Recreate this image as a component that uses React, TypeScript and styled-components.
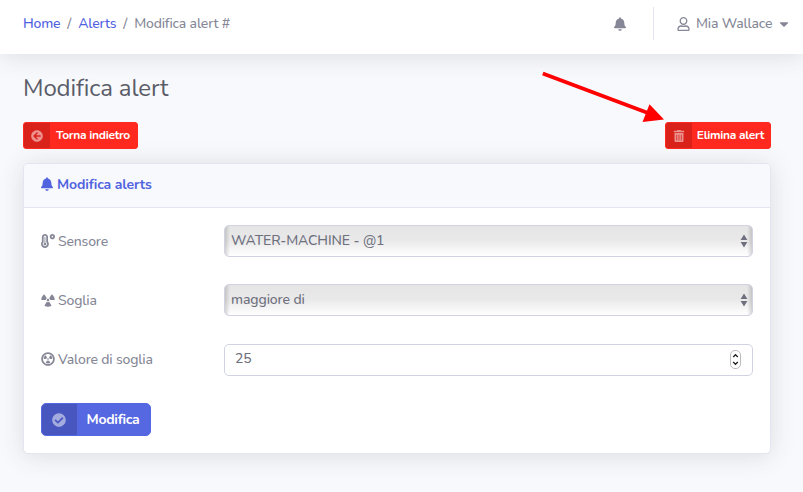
import React from 'react';
import styled, { createGlobalStyle } from 'styled-components';
import {
  FaArrowCircleLeft,
  FaBell,
  FaCaretDown,
  FaCheckCircle,
  FaRadiation,
  FaRadiationAlt,
  FaRegUser,
  FaTemperatureHigh,
  FaTrashAlt,
} from 'react-icons/fa';

const GlobalStyle = createGlobalStyle`
  *, *::before, *::after { box-sizing: border-box; }
  body {
    margin: 0;
    background: #f8f9fc;
    color: #858796;
    font: 500 14px/21px Nunito, Lato, sans-serif;
    letter-spacing: -0.18px;
  }
`;

const Page = styled.div`
  min-height: 492px;
  overflow: hidden;
`;

const Topbar = styled.header`
  display: flex;
  align-items: center;
  height: 54px;
  padding: 0 14px 7px 23px;
  background: #fff;
  box-shadow: 0 2px 25px rgba(58, 59, 69, 0.15);
`;

const Breadcrumb = styled.nav`
  display: flex;
  gap: 7px;
  margin-right: auto;
`;

const Crumb = styled.a`
  color: #4e5fdf;
  text-decoration: none;
`;

const AlertsBell = styled(FaBell)`
  width: 12px;
  height: 14px;
`;

const Divider = styled.div`
  width: 1px;
  height: 33px;
  margin: 0 23px 0 27px;
  background: #e3e6f0;
`;

const UserMenu = styled.div`
  display: flex;
  align-items: center;
  white-space: nowrap;
`;

const UserName = styled.span`
  width: 77px;
  margin: 0 6px;
`;

const UserIcon = styled(FaRegUser)`
  width: 13px;
  height: 14px;
`;

const Caret = styled(FaCaretDown)`
  width: 10px;
  height: 14px;
`;

const Main = styled.main`
  padding: 19px 32px 0 23px;
`;

const Title = styled.h1`
  margin: 0 0 19px;
  color: #5a5c69;
  font-size: 24px;
  font-weight: 400;
  line-height: 30px;
  letter-spacing: -0.12px;
`;

const Actions = styled.div`
  display: flex;
  justify-content: space-between;
  margin-bottom: 14px;
`;

const SplitButton = styled.button<{ $large?: boolean }>`
  display: flex;
  align-items: stretch;
  justify-self: start;
  height: ${p => (p.$large ? 33 : 27)}px;
  padding: 0;
  border: 1px solid ${p => (p.$large ? '#5567e1' : '#ff291f')};
  border-radius: ${p => (p.$large ? 5 : 3)}px;
  background: ${p => (p.$large ? '#5567e1' : '#ff291f')};
  color: #fff;
  font: inherit;
  font-size: ${p => (p.$large ? 14 : 12)}px;
  font-weight: 680;
  overflow: hidden;
`;

const ButtonIcon = styled.span<{ $large?: boolean }>`
  display: flex;
  align-items: center;
  justify-content: center;
  width: ${p => (p.$large ? 35 : 26)}px;
  padding-right: 1px;
  background: rgba(0, 0, 0, 0.15);
  color: rgba(255, 255, 255, 0.5);
  font-size: ${p => (p.$large ? 14 : 12)}px;
`;

const ButtonLabel = styled.span<{ $width: number }>`
  display: flex;
  align-items: center;
  justify-content: center;
  width: ${p => p.$width}px;
  padding-right: 1px;
  white-space: nowrap;
  letter-spacing: -0.28px;
`;

const Card = styled.section`
  height: 291px;
  border: 1px solid #e3e6f0;
  border-radius: 5px;
  background: #fff;
  box-shadow: 0 2px 25px rgba(58, 59, 69, 0.15);
`;

const CardHeader = styled.h2`
  display: flex;
  align-items: center;
  gap: 4px;
  height: 44px;
  margin: 0;
  padding: 0 17px 2px;
  border-bottom: 1px solid #e3e6f0;
  border-radius: 4px 4px 0 0;
  background: #f8f9fc;
  color: #5163df;
  font-size: 14px;
  font-weight: 700;
  letter-spacing: -0.12px;
`;

const HeaderBell = styled(FaBell)`
  width: 12px;
  height: 14px;
  margin-bottom: 1px;
`;

const Form = styled.form`
  display: grid;
  gap: 27.4px;
  padding: 17px;
`;

const Field = styled.div`
  display: grid;
  grid-template-columns: 183px 1fr;
  align-items: center;
  height: 32px;
`;

const Label = styled.label`
  display: flex;
  align-items: center;
  gap: 3px;

  svg {
    width: 14px;
    height: 14px;
    margin-bottom: 1px;
  }
`;

const Control = styled.div`
  display: flex;
  align-items: center;
  justify-content: space-between;
  height: 100%;
  padding: 0 11px 2px 10px;
  border: 1px solid #d1d3e2;
  border-radius: 5px;
  background: #fff;
  color: #6e707e;
  letter-spacing: -0.1px;
`;

const SelectControl = styled(Control)`
  padding: 0 4px 2px 6px;
  background:
    linear-gradient(90deg, rgba(0, 0, 0, 0.15), transparent 5px, transparent calc(100% - 5px), rgba(0, 0, 0, 0.15)),
    linear-gradient(#e5e5e5, #e9e9e9 48%, #fff);
`;

const Arrows = styled.svg`
  width: 8px;
  height: 14px;
  margin-top: 2px;
  fill: #6e707e;
`;

const Stepper = styled.svg`
  width: 11px;
  height: 19px;
  margin-top: 1px;
`;

const Pointer = styled.svg`
  position: absolute;
  top: 68px;
  left: 538px;
  width: 130px;
  height: 60px;
  pointer-events: none;
`;

function Select({ value }: { value: string }) {
  return (
    <SelectControl role="combobox">
      <span>{value}</span>
      <Arrows viewBox="0 0 8 14">
        <path d="M4 .5 7.4 6H.6zM4 13.5.6 8h6.8z" />
      </Arrows>
    </SelectControl>
  );
}

export default function App() {
  return (
    <Page>
      <GlobalStyle />
      <Topbar>
        <Breadcrumb>
          <Crumb>Home</Crumb>
          <span>/</span>
          <Crumb>Alerts</Crumb>
          <span>/</span>
          <span>Modifica alert #</span>
        </Breadcrumb>
        <AlertsBell />
        <Divider />
        <UserMenu>
          <UserIcon />
          <UserName>Mia Wallace</UserName>
          <Caret />
        </UserMenu>
      </Topbar>
      <Main>
        <Title>Modifica alert</Title>
        <Actions>
          <SplitButton>
            <ButtonIcon><FaArrowCircleLeft /></ButtonIcon>
            <ButtonLabel $width={87}>Torna indietro</ButtonLabel>
          </SplitButton>
          <SplitButton>
            <ButtonIcon><FaTrashAlt /></ButtonIcon>
            <ButtonLabel $width={78}>Elimina alert</ButtonLabel>
          </SplitButton>
        </Actions>
        <Card>
          <CardHeader><HeaderBell />Modifica alerts</CardHeader>
          <Form>
            <Field>
              <Label><FaTemperatureHigh />Sensore</Label>
              <Select value="WATER-MACHINE - @1" />
            </Field>
            <Field>
              <Label><FaRadiation />Soglia</Label>
              <Select value="maggiore di" />
            </Field>
            <Field>
              <Label><FaRadiationAlt />Valore di soglia</Label>
              <Control>
                <span>25</span>
                <Stepper viewBox="0 0 11 19" fill="none">
                  <rect x=".5" y=".5" width="10" height="18" rx="4.5" fill="#fff" stroke="#bdbdbd" />
                  <path d="m3.2 7 2.3-2.3L7.8 7M3.2 12l2.3 2.3L7.8 12" stroke="#222" strokeWidth="1.3" />
                </Stepper>
              </Control>
            </Field>
            <SplitButton type="button" $large>
              <ButtonIcon $large><FaCheckCircle /></ButtonIcon>
              <ButtonLabel $width={73}>Modifica</ButtonLabel>
            </SplitButton>
          </Form>
        </Card>
      </Main>
      <Pointer viewBox="0 0 130 60">
        <path d="M4.8 5.5 110 45" stroke="#f00" strokeWidth="4" />
        <path d="m111.5 36.2 14.5 15.2-21.5 2.6z" fill="#f00" />
      </Pointer>
    </Page>
  );
}
